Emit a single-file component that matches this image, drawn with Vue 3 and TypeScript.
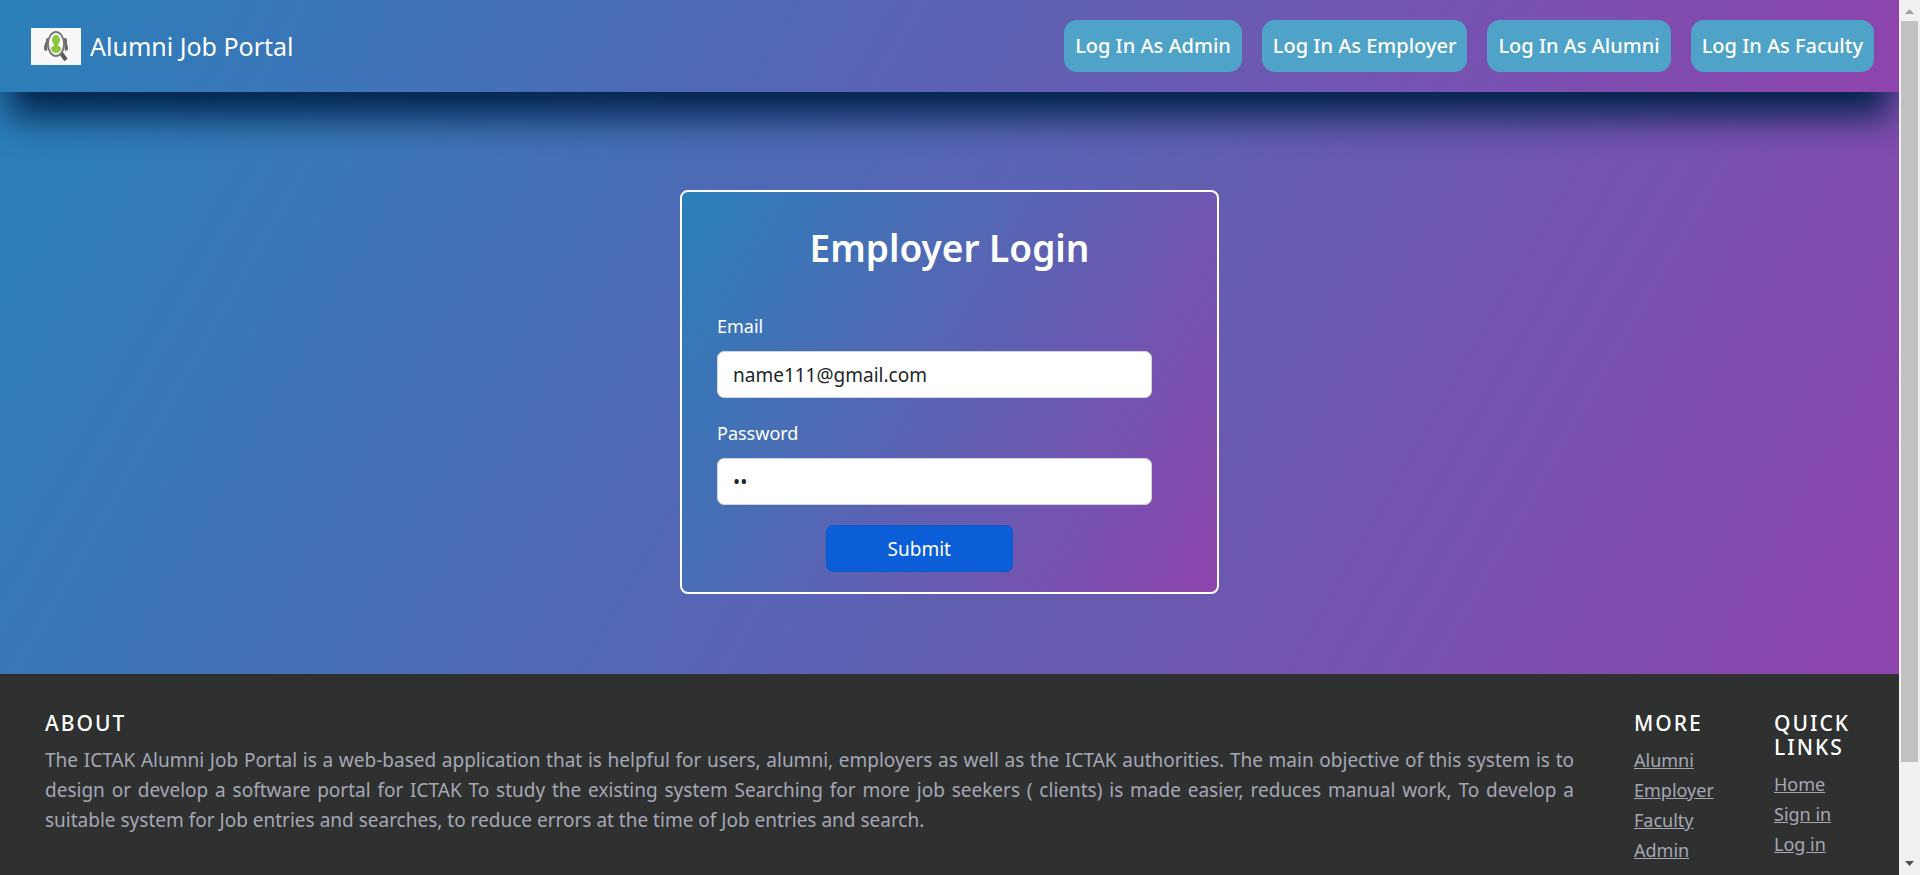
<script setup lang="ts">
import { ref } from 'vue'

const loginRoles: string[] = ['Admin', 'Employer', 'Alumni', 'Faculty']
const moreLinks: string[] = ['Alumni', 'Employer', 'Faculty', 'Admin']
const quickLinks: string[] = ['Home', 'Sign in', 'Log in']

const email = ref('name111@gmail.com')
const password = ref('12')
</script>

<template>
  <div class="viewport">
    <div class="page">
      <header class="navbar">
        <a class="brand" href="#">
          <svg class="logo" viewBox="0 0 50 37" aria-hidden="true">
            <rect width="50" height="37" fill="#f7f7f7" />
            <g fill="#66686b">
              <rect x="15" y="10" width="4" height="6" rx="2" />
              <path d="M17 14h-2.500q-1.500 3-1.500 8l3 1z" />
              <rect x="32" y="10" width="4" height="6" rx="2" />
              <path d="M33 14h2.500q1.500 3 1.500 8l-3 1z" />
            </g>
            <path d="M30 25l5 7" stroke="#58595b" stroke-width="4" />
            <ellipse cx="25" cy="16" rx="8" ry="12" fill="#fff" stroke="#77797c" stroke-width="2" />
            <ellipse cx="25" cy="12" rx="4" ry="5" fill="#8cc63f" />
            <path d="M23 15h4v3q3 0 3 3q-1 4-5 4q-4 0-5-4q0-3 3-3z" fill="#8cc63f" />
          </svg>
          <span>Alumni Job Portal</span>
        </a>
        <nav class="roles">
          <a v-for="role in loginRoles" :key="role" class="role" href="#">Log In As {{ role }}</a>
        </nav>
      </header>

      <main class="main">
        <form class="card" @submit.prevent>
          <h1 class="title">Employer Login</h1>
          <div class="fields">
            <div class="field">
              <label for="email">Email</label>
              <input id="email" v-model="email" type="email" />
            </div>
            <div class="field">
              <label for="password">Password</label>
              <input id="password" v-model="password" type="password" />
            </div>
            <button class="submit" type="submit">Submit</button>
          </div>
        </form>
      </main>

      <footer class="footer">
        <section>
          <h2>About</h2>
          <p>
            The ICTAK Alumni Job Portal is a web-based application that is helpful for users, alumni,
            employers as well as the ICTAK authorities. The main objective of this system is to design or
            develop a software portal for ICTAK To study the existing system Searching for more job seekers
            ( clients) is made easier, reduces manual work, To develop a suitable system for Job entries
            and searches, to reduce errors at the time of Job entries and search.
          </p>
        </section>
        <section>
          <h2>More</h2>
          <ul>
            <li v-for="link in moreLinks" :key="link"><a href="#">{{ link }}</a></li>
          </ul>
        </section>
        <section>
          <h2>Quick Links</h2>
          <ul>
            <li v-for="link in quickLinks" :key="link"><a href="#">{{ link }}</a></li>
          </ul>
        </section>
      </footer>
    </div>

    <div class="scrollbar" aria-hidden="true">
      <svg viewBox="0 0 21 21"><path d="M6 14l4.500-5 4.500 5z" fill="#a3a3a3" /></svg>
      <div class="track"><div class="thumb"></div></div>
      <svg viewBox="0 0 21 21"><path d="M6 7l4.500 5 4.500-5z" fill="#505050" /></svg>
    </div>
  </div>
</template>

<style>
body {
  margin: 0;
}
</style>

<style scoped>
* {
  box-sizing: border-box;
}

.viewport {
  --blend: linear-gradient(120deg, #2980b9, #8e44ad);
  display: grid;
  grid-template-columns: 1fr 21px;
  height: 100vh;
  overflow: hidden;
  font-family: "Comic Sans MS", "Noto Sans", sans-serif;
}

.page {
  display: flex;
  flex-direction: column;
  min-width: 0;
  overflow: hidden;
  background: #2f3130;
}

.navbar {
  position: relative;
  z-index: 1;
  display: flex;
  flex: none;
  align-items: center;
  justify-content: space-between;
  padding: 20px 25px 20px 31px;
  background: var(--blend);
  box-shadow: 0 32px 36px -8px #00224b;
}

.brand {
  display: flex;
  align-items: center;
  gap: 9px;
  color: #fff;
  font-size: 25px;
  text-decoration: none;
}

.logo {
  width: 50px;
  height: 37px;
}

.roles {
  display: flex;
  gap: 20px;
}

.role {
  padding: 0 11px;
  border-radius: 13px;
  background: #4fa3c8;
  color: #fff;
  font-size: 20px;
  font-weight: 500;
  line-height: 52px;
  text-decoration: none;
}

.main {
  display: flex;
  flex: none;
  justify-content: center;
  padding: 98px 20px 80px;
  background: var(--blend);
}

.card {
  width: 539px;
  padding: 32px 65px 20px 35px;
  border: 2px solid #fff;
  border-radius: 8px;
  background: var(--blend);
  color: #fff;
  font-family: "Segoe UI", "Noto Sans", sans-serif;
}

.title {
  margin: 0 -30px 39px 0;
  font-size: 37px;
  font-weight: 600;
  line-height: 48px;
  text-align: center;
}

.fields {
  display: flex;
  flex-direction: column;
  gap: 20px;
}

.field {
  display: flex;
  flex-direction: column;
  gap: 10px;
}

.field label {
  font-size: 18px;
  line-height: 30px;
}

.field input {
  width: 100%;
  height: 47px;
  padding: 0 15px;
  border: 1px solid #ced4da;
  border-radius: 7px;
  background: #fff;
  color: #212529;
  font: inherit;
  font-size: 19px;
}

.submit {
  width: 43%;
  height: 47px;
  margin-left: 25%;
  border: 1px solid #0a58ca;
  border-radius: 7px;
  background: #0b5ed7;
  color: #fff;
  font: inherit;
  font-size: 19px;
}

.footer {
  display: grid;
  flex: none;
  grid-template-columns: 1fr 80px 80px;
  gap: 60px;
  padding: 37px 45px;
  background: #2f3130;
  color: #a6a7b5;
  font-size: 18px;
  line-height: 30px;
}

.footer h2 {
  margin: 0 0 10px;
  color: #fff;
  font-size: 21px;
  font-weight: 500;
  letter-spacing: 2px;
  line-height: 24px;
  text-transform: uppercase;
}

.footer p {
  margin: 0;
  font-size: 19px;
  text-align: justify;
}

.footer ul {
  margin: 0;
  padding: 0;
  list-style: none;
}

.footer a {
  color: inherit;
}

.scrollbar {
  display: flex;
  flex-direction: column;
  background: #f1f1f1;
}

.scrollbar svg {
  width: 21px;
  height: 21px;
}

.track {
  flex: 1;
  padding: 0 2px;
}

.thumb {
  height: 89%;
  background: #c1c1c1;
}
</style>
